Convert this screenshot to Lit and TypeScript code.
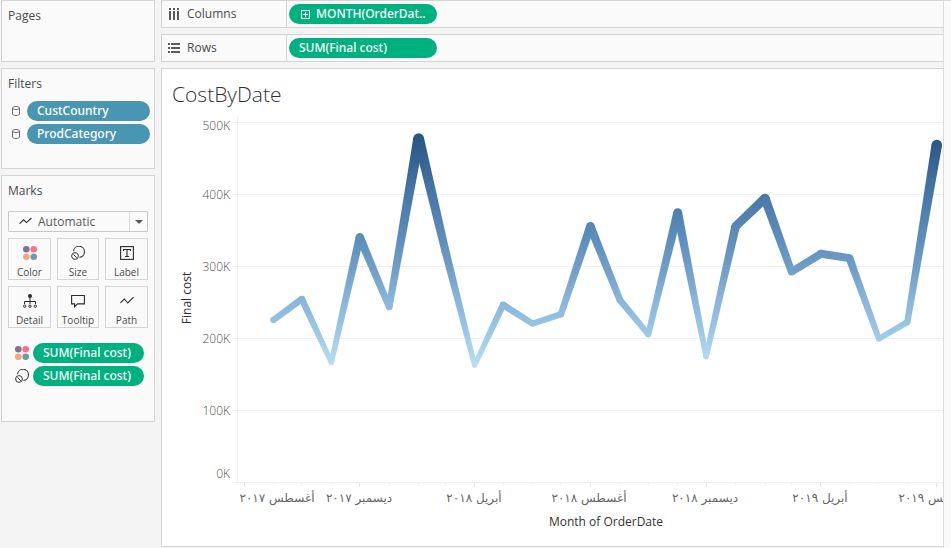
import { LitElement, html, css, svg } from "lit";
import { customElement, property } from "lit/decorators.js";

const colorIcon = html`<svg width="14" height="14" viewBox="0 0 14 14" aria-hidden="true">
  <circle cx="3.3" cy="3.3" r="3.3" fill="#866f97" /><circle cx="10.7" cy="3.3" r="3.3" fill="#f97285" />
  <circle cx="3.3" cy="10.7" r="3.3" fill="#f4a67c" /><circle cx="10.7" cy="10.7" r="3.3" fill="#6f9aa8" />
</svg>`;
const sizeIcon = html`<svg width="14" height="14" viewBox="0 0 14 14" fill="none" stroke="#3a3a3a" aria-hidden="true">
  <path d="M2.5 5.2A5.5 5.5 0 1 1 8.4 11.3" stroke-width="1.1" />
  <circle cx="4" cy="10" r="3.4" /><path d="M2.4 8.4 5.8 11.8" />
</svg>`;
const labelIcon = html`<svg width="14" height="14" viewBox="0 0 14 14" fill="none" stroke="#2b2b2b" aria-hidden="true">
  <rect x=".6" y=".6" width="12.8" height="12.8" stroke-width="1.1" />
  <path d="M3.5 5V3.5h7V5M7 3.5v7M5 10.5h4" stroke-width="1.1" />
</svg>`;
const detailIcon = html`<svg width="14" height="14" viewBox="0 0 14 14" fill="none" stroke="#2b2b2b" aria-hidden="true">
  <circle cx="7" cy="2" r="2" fill="#2b2b2b" stroke="none" />
  <path d="M7 3v7M1.5 10V7.5h11V10" />
  <circle cx="1.7" cy="12.2" r="1.2" /><circle cx="7" cy="12.2" r="1.2" /><circle cx="12.3" cy="12.2" r="1.2" />
</svg>`;
const tooltipIcon = html`<svg width="14" height="14" viewBox="0 0 14 14" fill="none" stroke="#2b2b2b" stroke-width="1.1" aria-hidden="true">
  <path d="M.6 1.5h12.8v8.4H6.6L3.6 12.7V9.9H.6Z" />
</svg>`;
const pathIcon = html`<svg width="14" height="14" viewBox="0 0 14 14" fill="none" stroke="#2b2b2b" stroke-width="1.1" aria-hidden="true">
  <path d="M.4 8.8 4.4 5 7.8 9 13.6 3.2" />
</svg>`;
const trendIcon = html`<svg width="14" height="10" viewBox="0 0 14 10" fill="none" stroke="#2b2b2b" stroke-width="1.1" aria-hidden="true">
  <path d="M.6 7.6 4.6 3.8 7.4 6.6 12.4 2" />
</svg>`;
const sourceIcon = html`<svg width="8" height="10" viewBox="0 0 8 10" fill="none" stroke="#6b6b6b" aria-hidden="true">
  <path d="M.5 2V8c0 2 7 2 7 0V2c0-2-7-2-7 0c0 2 7 2 7 0" />
</svg>`;
const columnsIcon = html`<svg width="12" height="12" viewBox="0 0 12 12" fill="#5a5a5a" aria-hidden="true">
  <path d="M1 0h2v2H1zM5 0h2v2H5zM9 0h2v2H9zM1 3h2v9H1zM5 3h2v9H5zM9 3h2v9H9z" />
</svg>`;
const rowsIcon = html`<svg width="12" height="12" viewBox="0 0 12 12" fill="#5a5a5a" aria-hidden="true">
  <path d="M0 1h2v2H0zM0 5h2v2H0zM0 9h2v2H0zM3 1h9v2H3zM3 5h9v2H3zM3 9h9v2H3z" />
</svg>`;
const plusIcon = html`<svg width="9" height="9" viewBox="0 0 9 9" fill="none" stroke="#fff" aria-hidden="true">
  <path d="M.5.5h8v8h-8zM2 4.5h5M4.5 2v5" />
</svg>`;

const START = Date.UTC(2017, 7, 1);
const DAY = 86400000;

/** Final cost per month in thousands, September 2017 onwards. */
const COSTS = [
  225, 254, 166, 340, 243, 477, 322, 162, 246, 220, 233, 355,
  253, 205, 374, 174, 355, 394, 292, 317, 311, 199, 222, 468,
];

const LABELS = [
  { month: 0, text: "أغسطس ٢٠١٧" },
  { month: 4, text: "ديسمبر ٢٠١٧" },
  { month: 8, text: "أبريل ٢٠١٨" },
  { month: 12, text: "أغسطس ٢٠١٨" },
  { month: 16, text: "ديسمبر ٢٠١٨" },
  { month: 20, text: "أبريل ٢٠١٩" },
  { month: 24, text: "أغسطس ٢٠١٩" },
];

const LEFT = 75;
const TOP = 14;
const BASE = 374;

const monthX = (m: number) => 82 + ((Date.UTC(2017, 7 + m, 1) - START) / DAY) * 0.949;
const costY = (k: number) => BASE - k * 0.72;
const radius = (k: number) => 2.6 + (k - 162) * 0.0088;

@customElement("cost-chart")
export class CostChart extends LitElement {
  static styles = css`
    :host { display: block; }
    .chart { display: block; width: 100%; height: 430px; font-family: "Open Sans", "DejaVu Sans", sans-serif; font-size: 12px; }
    .grid { stroke: #f0f0f0; }
    .tick { stroke: #e6e6e6; }
    .value { fill: #505050; text-anchor: end; font-weight: 300; }
    .month { fill: #666; text-anchor: middle; direction: rtl; font-family: "DejaVu Sans", sans-serif; }
    .axis { fill: #333; text-anchor: middle; font-weight: 500; }
  `;

  private segments() {
    const pts = COSTS.map((k, i) => ({ x: monthX(i + 1), y: costY(k), r: radius(k) }));
    return pts.map((a, i) => {
      const b = pts[i + 1];
      if (!b) return svg`<circle cx=${a.x} cy=${a.y} r=${a.r} />`;
      const len = Math.hypot(b.x - a.x, b.y - a.y);
      const nx = -(b.y - a.y) / len;
      const ny = (b.x - a.x) / len;
      const corners = [
        [a.x + nx * a.r, a.y + ny * a.r], [b.x + nx * b.r, b.y + ny * b.r],
        [b.x - nx * b.r, b.y - ny * b.r], [a.x - nx * a.r, a.y - ny * a.r],
      ];
      return svg`<circle cx=${a.x} cy=${a.y} r=${a.r} /><polygon points=${corners.map((c) => c.join(",")).join(" ")} />`;
    });
  }

  render() {
    return html`<svg class="chart" role="img" aria-label="Final cost by month of OrderDate">
      <defs>
        <linearGradient id="cost" gradientUnits="userSpaceOnUse" x1="0" y1="31" x2="0" y2="257">
          <stop offset="0" stop-color="#2a5783" />
          <stop offset="0.25" stop-color="#4878a8" />
          <stop offset="0.45" stop-color="#5e8fbc" />
          <stop offset="0.58" stop-color="#719fc7" />
          <stop offset="0.71" stop-color="#88b5d9" />
          <stop offset="0.85" stop-color="#9bc8e6" />
          <stop offset="1" stop-color="#b9ddf1" />
        </linearGradient>
      </defs>
      ${[0, 100, 200, 300, 400, 500].map((k) => {
        const y = costY(k);
        const base = k === 0 ? y - 4 : k === 500 ? y + 8 : y + 5;
        return svg`<line class="grid" x1=${LEFT - 5} x2="100%" y1=${y + 0.5} y2=${y + 0.5} />
          <text class="value" x=${LEFT - 7} y=${base}>${k}K</text>`;
      })}
      <line class="grid" x1=${LEFT + 0.5} x2=${LEFT + 0.5} y1=${TOP - 6} y2=${BASE} />
      ${Array.from({ length: 25 }, (_, m) => {
        const x = Math.floor(monthX(m)) + 0.5;
        return svg`<line class="tick" x1=${x} x2=${x} y1=${BASE + 1} y2=${BASE + (m % 4 ? 2 : 5)} />`;
      })}
      ${LABELS.map(({ month, text }) => svg`<text class="month" x=${Math.max(Math.round(monthX(month)) - 1, LEFT + 40)} y="394">${text}</text>`)}
      <g fill="url(#cost)">${this.segments()}</g>
      <text class="axis" x="444" y="418">Month of OrderDate</text>
      <text class="axis" transform="translate(29 190) rotate(-90)">Final cost</text>
    </svg>`;
  }
}

@customElement("field-pill")
export class FieldPill extends LitElement {
  @property() tone = "measure";
  @property({ type: Boolean }) expandable = false;

  static styles = css`
    :host { display: block; min-width: 0; }
    .pill {
      display: flex; align-items: center; gap: 6px; width: 100%; height: 20px; padding: 0 10px;
      border: 0; border-radius: 10px; background: #00b180; color: #fff; white-space: nowrap;
      font: 500 12px/20px "Noto Sans", sans-serif; cursor: pointer;
    }
    .dimension { background: #4996b2; }
    .expandable { padding-left: 12px; }
  `;

  render() {
    return html`<button class="pill ${this.tone} ${this.expandable ? "expandable" : ""}">
      ${this.expandable ? plusIcon : ""}<slot></slot>
    </button>`;
  }
}

@customElement("app-root")
export class AppRoot extends LitElement {
  static styles = css`
    :host {
      display: flex; min-height: 100vh; background: #f4f4f4; color: #4a4a4a;
      font: 12px/16px "Open Sans", sans-serif;
    }
    * { box-sizing: border-box; }
    .side { flex: none; width: 161px; padding: 0 6px 0 1px; display: flex; flex-direction: column; gap: 6px; }
    .card { border: 1px solid #d4d4d4; background: #fafafa; padding: 7px 6px; }
    .pages { min-height: 62px; }
    .filters { min-height: 101px; padding-right: 4px; }
    .marks { min-height: 247px; }
    h2 { margin: 0; font-size: 12px; font-weight: 400; line-height: 16px; }
    .fields { list-style: none; margin: 9px 0 0; padding: 0; display: flex; flex-direction: column; gap: 3px; }
    .fields li { display: grid; grid-template-columns: 19px 1fr; align-items: center; }
    .fields svg { margin-left: 4px; }
    .encodings { margin-top: 15px; padding: 0 4px 0 6px; }
    .encodings svg { margin-left: 1px; }
    .kind { position: relative; display: block; margin-top: 12px; }
    .kind select {
      appearance: none; display: block; width: 100%; height: 21px; padding: 0 0 0 29px; margin: 0;
      border: 1px solid #c8c8c8; border-radius: 1px; background: #fafafa; color: #5a5a5a;
      font: 12px/19px "Open Sans", sans-serif;
    }
    .kind svg { position: absolute; left: 11px; top: 5px; pointer-events: none; }
    .arrow {
      position: absolute; right: 1px; top: 1px; width: 18px; height: 19px; border-left: 1px solid #dcdcdc;
      display: grid; place-items: center; pointer-events: none;
    }
    .arrow::after { content: ""; border: 4px solid transparent; border-top-color: #5a5a5a; border-bottom: 0; }
    .grid { display: grid; grid-template-columns: 43px 42px 43px; justify-content: space-between; row-gap: 6px; margin-top: 6px; }
    .grid button {
      height: 42px; padding: 5px 0 0; border: 1px solid #d4d4d4; background: #fafafa; color: #4a4a4a;
      display: flex; flex-direction: column; align-items: center; justify-content: center; gap: 6px;
      font: 10px/12px "Open Sans", sans-serif; cursor: pointer;
    }
    .main { flex: 1; min-width: 0; display: flex; flex-direction: column; gap: 6px; padding-bottom: 1px; }
    .shelf { display: flex; height: 28px; border: 1px solid #d4d4d4; border-right: 0; background: #fafafa; }
    .shelf h2 { width: 125px; display: flex; align-items: center; gap: 7px; padding-left: 6px; border-right: 1px solid #d4d4d4; }
    .shelf field-pill { width: 148px; margin: 3px 0 0 2px; }
    .viz { flex: 1; border: 1px solid #d4d4d4; border-right: 0; background: #fff; overflow: hidden; }
    h1 { margin: 11px 0 0 10px; font-size: 21px; line-height: 28px; font-weight: 300; color: #333; }
    .edge { flex: none; width: 8px; border: solid #dcdcdc; border-width: 1px 0 0 1px; background: #fafafa; }
  `;

  private mark(icon: unknown, text: string) {
    return html`<button>${icon}<span>${text}</span></button>`;
  }

  render() {
    return html`
      <aside class="side">
        <section class="card pages"><h2>Pages</h2></section>
        <section class="card filters">
          <h2>Filters</h2>
          <ul class="fields">
            <li>${sourceIcon}<field-pill tone="dimension">CustCountry</field-pill></li>
            <li>${sourceIcon}<field-pill tone="dimension">ProdCategory</field-pill></li>
          </ul>
        </section>
        <section class="card marks">
          <h2>Marks</h2>
          <div class="kind">
            <select aria-label="Marks"><option>Automatic</option></select>
            ${trendIcon}<span class="arrow"></span>
          </div>
          <div class="grid">
            ${this.mark(colorIcon, "Color")}${this.mark(sizeIcon, "Size")}${this.mark(labelIcon, "Label")}
            ${this.mark(detailIcon, "Detail")}${this.mark(tooltipIcon, "Tooltip")}${this.mark(pathIcon, "Path")}
          </div>
          <ul class="fields encodings">
            <li>${colorIcon}<field-pill>SUM(Final cost)</field-pill></li>
            <li>${sizeIcon}<field-pill>SUM(Final cost)</field-pill></li>
          </ul>
        </section>
      </aside>
      <main class="main">
        <section class="shelf">
          <h2>${columnsIcon}Columns</h2>
          <field-pill expandable>MONTH(OrderDat..</field-pill>
        </section>
        <section class="shelf">
          <h2>${rowsIcon}Rows</h2>
          <field-pill>SUM(Final cost)</field-pill>
        </section>
        <section class="viz">
          <h1>CostByDate</h1>
          <cost-chart></cost-chart>
        </section>
      </main>
      <div class="edge"></div>
    `;
  }
}
